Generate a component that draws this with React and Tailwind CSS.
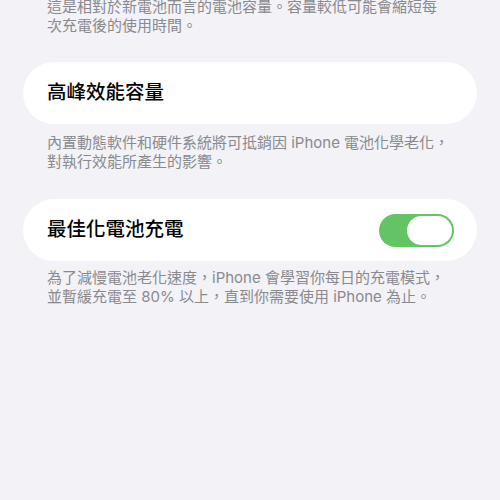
import React from 'react';

const font = { fontFamily: '"Inter", "Noto Sans CJK TC", sans-serif' };

const Toggle = ({ on }) => (
  <div className={`w-[75px] h-[33px] rounded-full p-[2px] flex ${on ? 'bg-[#62c462] justify-end' : 'bg-[#e5e5ea] justify-start'}`}>
    <div className="w-[45px] h-[29px] rounded-full bg-white" />
  </div>
);

const Card = ({ title, children }) => (
  <div className="bg-white rounded-full h-[62px] pl-6 pr-[23px] flex items-center justify-between">
    <span className="text-[19.5px] font-medium text-black">{title}</span>
    {children}
  </div>
);

const Note = ({ children, className = '' }) => (
  <p className={`px-6 text-[15px] leading-[19px] text-[#8a8a8e] ${className}`}>{children}</p>
);

export default function App() {
  return (
    <div className="bg-[#f2f2f7] h-[500px] overflow-hidden px-[23px]" style={font}>
      <Note className="-mt-[3px]">
        這是相對於新電池而言的電池容量。容量較低可能會縮短每
        <br />
        次充電後的使用時間。
      </Note>
      <div className="mt-[27px]">
        <Card title="高峰效能容量" />
      </div>
      <Note className="mt-[9px]">
        內置動態軟件和硬件系統將可抵銷因 iPhone 電池化學老化，
        <br />
        對執行效能所產生的影響。
      </Note>
      <div className="mt-[28px]">
        <Card title="最佳化電池充電">
          <Toggle on />
        </Card>
      </div>
      <Note className="mt-[7px]">
        為了減慢電池老化速度，iPhone 會學習你每日的充電模式，
        <br />
        並暫緩充電至 80% 以上，直到你需要使用 iPhone 為止。
      </Note>
    </div>
  );
}
